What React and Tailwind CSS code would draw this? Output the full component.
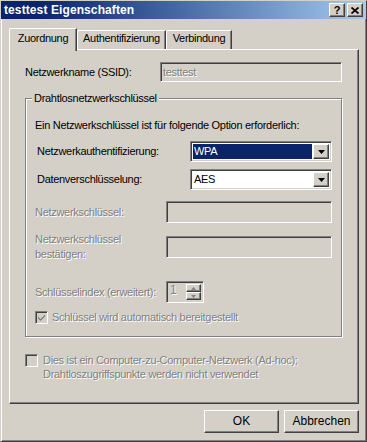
import React from 'react';

const sunken =
  'border border-t-[#808080] border-l-[#808080] border-b-white border-r-white shadow-[inset_1px_1px_0_#404040,inset_-1px_-1px_0_#d4d0c8]';
const raised =
  'border border-t-white border-l-white border-b-[#404040] border-r-[#404040] shadow-[inset_-1px_-1px_0_#808080]';
const grayText = 'text-[#808080] [text-shadow:1px_1px_0_#ffffff]';

const DownArrow = ({ color = '#000' }) => (
  <svg width="7" height="4" viewBox="0 0 7 4">
    <path d="M0 0h7L3.5 4z" fill={color} />
  </svg>
);

const Combo = ({ value, selected }) => (
  <div className={`${sunken} w-[142px] h-[21px] bg-white flex items-stretch p-[2px]`}>
    <div className="flex-1 flex items-center pr-[1px]">
      <div className={`h-full flex-1 flex items-center pl-[1px] ${selected ? 'bg-[#0a246a] text-white' : 'text-black'}`}>
        {value}
      </div>
    </div>
    <div className={`${raised} w-[16px] bg-[#d4d0c8] flex items-center justify-center`}>
      <DownArrow />
    </div>
  </div>
);

const Check = ({ checked }) => (
  <div className={`${sunken} w-[13px] h-[13px] bg-[#d4d0c8] flex items-center justify-center shrink-0`}>
    {checked && (
      <svg width="7" height="7" viewBox="0 0 7 7">
        <path d="M0 2.5l2.5 2.5L7 0.5v2L2.5 7 0 4.5z" fill="#808080" />
      </svg>
    )}
  </div>
);

const Tab = ({ label, active, width }) => (
  <div
    className={`bg-[#d4d0c8] flex justify-center border-t border-l border-t-white border-l-white border-r border-r-[#404040] shadow-[inset_-1px_0_0_#808080] rounded-tl-[2px] ${
      active ? 'h-[23px] pt-[3px] relative z-10 -mb-[2px]' : 'h-[19px] pt-[1px]'
    }`}
    style={{ width }}
  >
    {label}
  </div>
);

export default function App() {
  return (
    <div
      className="w-[367px] h-[442px] bg-[#d4d0c8] border border-t-[#d4d0c8] border-l-[#d4d0c8] border-b-[#404040] border-r-[#404040] shadow-[inset_1px_1px_0_#ffffff,inset_-1px_-1px_0_#808080] flex flex-col text-[11px] leading-[13px] tracking-[-0.3px] text-black"
      style={{ fontFamily: '"Liberation Sans", Arial, sans-serif' }}
    >
      {/* title bar */}
      <div className="h-[18px] bg-gradient-to-r from-[#0a246a] from-10% to-[#a6caf0] flex items-center pl-[3px] pr-[3px]">
        <span className="text-white font-bold text-[12px] tracking-[0.1px]">testtest Eigenschaften</span>
        <div className="ml-auto flex gap-[2px]">
          <div className={`${raised} w-[16px] h-[14px] bg-[#d4d0c8] flex items-center justify-center font-bold text-[11px] leading-none tracking-normal`}>
            ?
          </div>
          <div className={`${raised} w-[16px] h-[14px] bg-[#d4d0c8] flex items-center justify-center`}>
            <svg width="8" height="7" viewBox="0 0 8 7">
              <path d="M0.5 0.5l7 6M7.5 0.5l-7 6" stroke="#000" strokeWidth="1.7" />
            </svg>
          </div>
        </div>
      </div>

      <div className="pl-[8px] pt-[8px] flex flex-col">
        {/* tabs */}
        <div className="flex items-end h-[22px]">
          <Tab label="Zuordnung" active width={68} />
          <Tab label="Authentifizierung" width={89} />
          <Tab label="Verbindung" width={66} />
        </div>

        {/* tab panel */}
        <div className="w-[350px] h-[355px] border border-t-white border-l-white border-b-[#404040] border-r-[#404040] shadow-[inset_-1px_-1px_0_#808080] flex flex-col">
          <div className="pt-[12px] pl-[15px] flex items-center">
            <span className="w-[135px]">Netzwerkname (SSID):</span>
            <div className={`${sunken} w-[182px] h-[20px] bg-[#d4d0c8] flex items-center pl-[2px] ${grayText}`}>
              testtest
            </div>
          </div>

          <fieldset className="ml-[15px] mt-[10px] w-[317px] border border-[#808080] shadow-[1px_1px_0_#ffffff,inset_1px_1px_0_#ffffff] pb-[12px] flex flex-col">
            <legend className="ml-[6px] px-[2px] bg-[#d4d0c8]">Drahtlosnetzwerkschlüssel</legend>

            <div className="pl-[9px] mt-[14px]">Ein Netzwerkschlüssel ist für folgende Option erforderlich:</div>

            <div className="flex items-center mt-[9px] pl-[11px]">
              <span className="w-[153px]">Netzwerkauthentifizierung:</span>
              <Combo value="WPA" selected />
            </div>
            <div className="flex items-center mt-[7px] pl-[11px]">
              <span className="w-[153px]">Datenverschlüsselung:</span>
              <Combo value="AES" />
            </div>

            <div className="flex items-center mt-[11px] pl-[9px]">
              <span className={`w-[131px] ${grayText}`}>Netzwerkschlüssel:</span>
              <div className={`${sunken} w-[166px] h-[22px] bg-[#d4d0c8]`} />
            </div>
            <div className="flex items-center mt-[9px] pl-[9px]">
              <span className={`w-[131px] leading-[15px] ${grayText}`}>
                Netzwerkschlüssel
                <br />
                bestätigen:
              </span>
              <div className={`${sunken} w-[166px] h-[22px] bg-[#d4d0c8]`} />
            </div>

            <div className="flex items-center mt-[19px] pl-[9px]">
              <span className={`w-[131px] ${grayText}`}>Schlüsselindex (erweitert):</span>
              <div className={`${sunken} w-[38px] h-[22px] bg-[#d4d0c8] flex items-stretch p-[2px]`}>
                <span className={`flex-1 pl-[1px] text-[12px] ${grayText}`}>1</span>
                <div className="w-[15px] flex flex-col">
                  <div className={`${raised} flex-1 bg-[#d4d0c8] flex items-center justify-center`}>
                    <svg width="5" height="3" viewBox="0 0 5 3">
                      <path d="M0 3h5L2.5 0z" fill="#808080" />
                    </svg>
                  </div>
                  <div className={`${raised} flex-1 bg-[#d4d0c8] flex items-center justify-center`}>
                    <svg width="5" height="3" viewBox="0 0 5 3">
                      <path d="M0 0h5L2.5 3z" fill="#808080" />
                    </svg>
                  </div>
                </div>
              </div>
            </div>

            <div className="flex items-center mt-[8px] pl-[9px] gap-[4px]">
              <Check checked />
              <span className={grayText}>Schlüssel wird automatisch bereitgestellt</span>
            </div>
          </fieldset>

          <div className="flex items-start mt-[16px] pl-[15px] gap-[5px]">
            <div className="mt-[1px]">
              <Check />
            </div>
            <span className={`leading-[14px] ${grayText}`}>
              Dies ist ein Computer-zu-Computer-Netzwerk (Ad-hoc);
              <br />
              Drahtloszugriffspunkte werden nicht verwendet
            </span>
          </div>
        </div>

        {/* buttons */}
        <div className="flex justify-end gap-[5px] mt-[6px] w-[350px]">
          <button className={`${raised} w-[75px] h-[23px] bg-[#d4d0c8] text-[12px] tracking-normal`}>OK</button>
          <button className={`${raised} w-[75px] h-[23px] bg-[#d4d0c8] text-[12px] tracking-normal`}>Abbrechen</button>
        </div>
      </div>
    </div>
  );
}
